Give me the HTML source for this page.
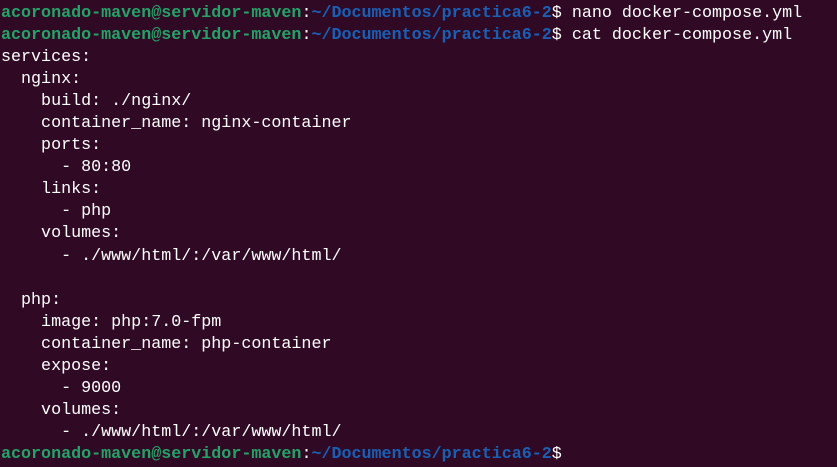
<!DOCTYPE html>
<html><head><meta charset="utf-8"><style>
html,body{margin:0;padding:0;background:#300a24;width:837px;height:467px;overflow:hidden}
pre{margin:0;position:absolute;left:1px;top:3px;font-family:"Liberation Mono",monospace;font-size:16.7px;line-height:22.05px;color:#ffffff}
.g{color:#26a269;font-weight:bold}
.b{color:#1a5fb4;font-weight:bold}
</style></head><body>
<pre><span class="g">acoronado-maven@servidor-maven</span>:<span class="b">~/Documentos/practica6-2</span>$ nano docker-compose.yml
<span class="g">acoronado-maven@servidor-maven</span>:<span class="b">~/Documentos/practica6-2</span>$ cat docker-compose.yml
services:
  nginx:
    build: ./nginx/
    container_name: nginx-container
    ports:
      - 80:80
    links:
      - php
    volumes:
      - ./www/html/:/var/www/html/

  php:
    image: php:7.0-fpm
    container_name: php-container
    expose:
      - 9000
    volumes:
      - ./www/html/:/var/www/html/
<span class="g">acoronado-maven@servidor-maven</span>:<span class="b">~/Documentos/practica6-2</span>$</pre>
</body></html>
